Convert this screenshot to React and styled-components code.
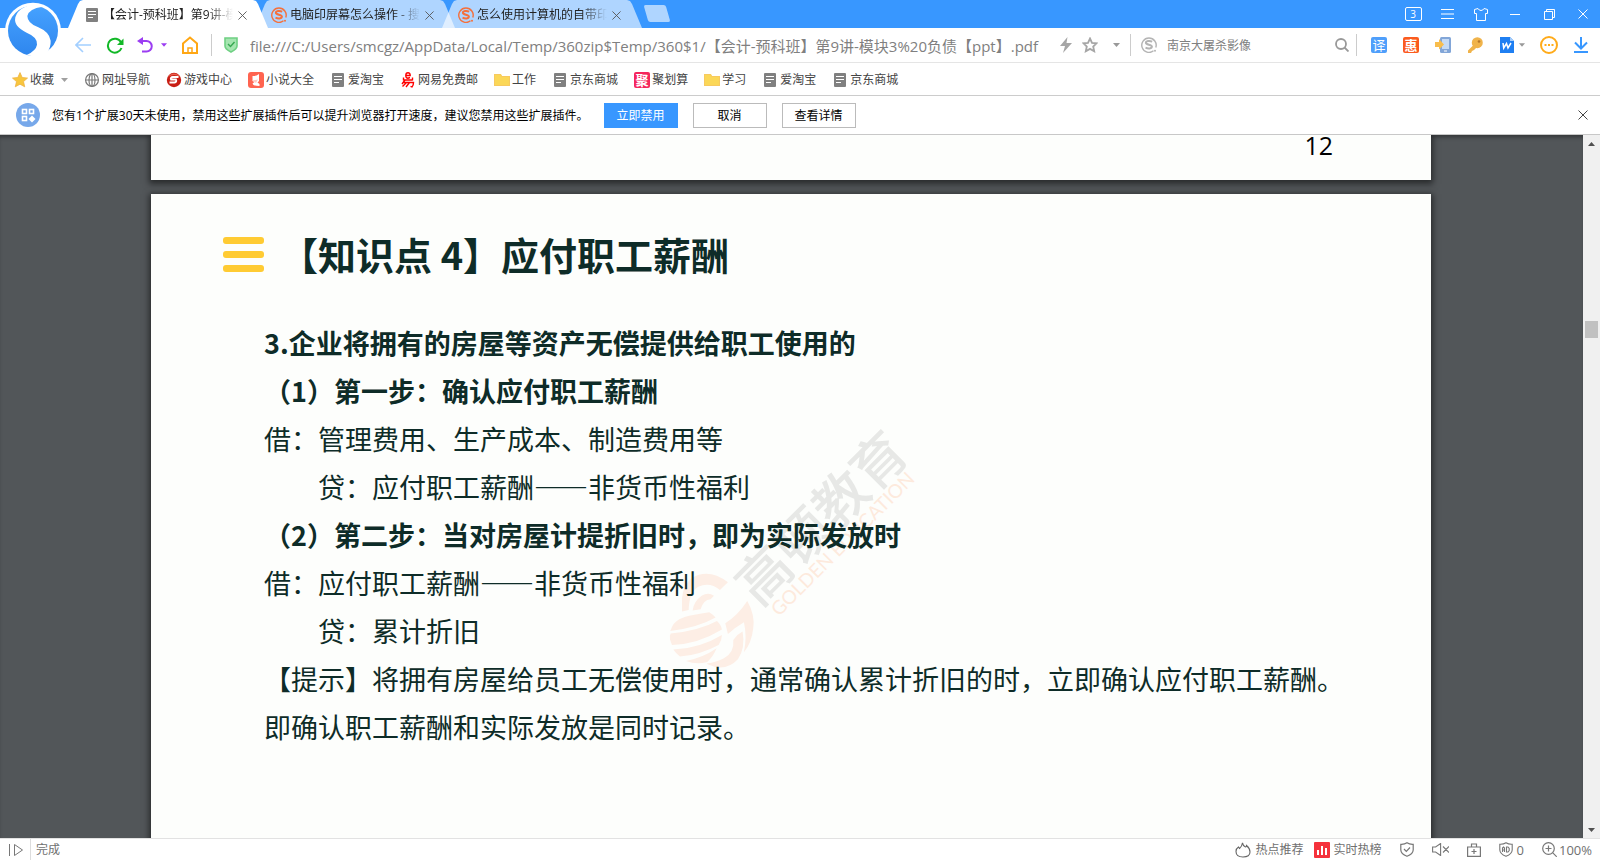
import React from "react";
import styled, { createGlobalStyle, css } from "styled-components";

const BLUE = "#3897ff";
const GREY = "#808080";

const GlobalStyle = createGlobalStyle`
  *, *::before, *::after { box-sizing: border-box; }
  body {
    margin: 0;
    font: 12px/16px "Open Sans", "Noto Sans CJK SC", sans-serif;
    color: #555;
    background: #fff;
  }
  button, input {
    font: inherit;
    color: inherit;
    border: 0;
    padding: 0;
    background: none;
  }
  svg { display: block; flex: none; }
  h1, h2, p { margin: 0; }
`;

const Window = styled.div`
  display: flex;
  flex-direction: column;
  height: 100vh;
  overflow: hidden;
`;

/* ---------- tab strip ---------- */

const Header = styled.header`
  position: relative;
`;

const BrandLogo = styled.svg`
  position: absolute;
  left: 0;
  top: 0;
  z-index: 3;
`;

const TabStrip = styled.div`
  display: flex;
  height: 28px;
  padding-left: 68px;
  background: ${BLUE};
`;

const slanted = css`
  &::before {
    content: "";
    position: absolute;
    z-index: -1;
    inset: 0;
    background: var(--fill);
    clip-path: polygon(
      0 100%, 10px 4px, 12px 1px, 15px 0,
      calc(100% - 15px) 0, calc(100% - 12px) 1px, calc(100% - 10px) 4px, 100% 100%
    );
  }
`;

const Tab = styled.div`
  --fill: ${(p) => (p.$active ? "#fff" : "rgba(255, 255, 255, 0.6)")};
  position: relative;
  z-index: ${(p) => (p.$active ? 2 : 1)};
  display: flex;
  align-items: center;
  width: 200px;
  margin-right: -13px;
  padding: 2px 16px 0;
  color: #222;
  ${slanted}
`;

const TabLabel = styled.button`
  display: flex;
  align-items: center;
  gap: 3px;
  width: 149px;
  span {
    flex: 1;
    min-width: 0;
    white-space: nowrap;
    text-align: left;
    mask-image: linear-gradient(to right, #000 80%, transparent);
  }
`;

const TabClose = styled.button`
  display: grid;
  place-items: center;
  width: 24px;
  height: 24px;
`;

const NewTab = styled.button`
  width: 22px;
  height: 17px;
  margin: 5px 0 0 17px;
  border-radius: 2px;
  background: rgba(255, 255, 255, 0.6);
  transform: skewX(16deg);
`;

const WindowControls = styled.div`
  display: flex;
  margin-left: auto;
`;

const WindowButton = styled.button`
  display: grid;
  place-items: center;
  width: 34px;
  height: 28px;
  color: #fff;
`;

const TabCount = styled.span`
  width: 17px;
  height: 14px;
  border: 1px solid #fff;
  border-radius: 2px;
  font-size: 10px;
  line-height: 12px;
  text-align: center;
`;

/* ---------- address bar ---------- */

const Toolbar = styled.div`
  display: flex;
  align-items: center;
  height: 35px;
  padding: 0 9px 0 67px;
  border-bottom: 1px solid #e5e5e5;
`;

const IconButton = styled.button`
  display: grid;
  place-items: center;
  width: ${(p) => p.$w || 32}px;
  height: 32px;
`;

const Divider = styled.span`
  width: 1px;
  height: 22px;
  background: #ccc;
`;

const AddressField = styled.label`
  display: flex;
  flex: 1;
  align-items: center;
  gap: 12px;
  padding-left: 12px;
  input {
    flex: 1;
    min-width: 0;
    height: 24px;
    font-size: 15px;
    color: ${GREY};
    outline: 0;
  }
`;

const SearchField = styled.label`
  display: flex;
  align-items: center;
  gap: 10px;
  width: 197px;
  padding-left: 10px;
  input {
    flex: 1;
    min-width: 0;
    height: 24px;
    outline: 0;
    &::placeholder { color: ${GREY}; opacity: 1; }
  }
`;

const Tools = styled.div`
  display: flex;
  gap: 12px;
  padding-left: 12px;
`;

const SplitTool = styled.div`
  display: flex;
`;

/* ---------- bookmarks ---------- */

const Bookmarks = styled.nav`
  display: flex;
  align-items: center;
  gap: 16px;
  height: 33px;
  padding: 1px 0 0 12px;
  border-bottom: 1px solid #ccc;
`;

const Bookmark = styled.a`
  display: flex;
  align-items: center;
  gap: 2px;
  color: #444;
  text-decoration: none;
  white-space: nowrap;
`;

const Caret = styled.svg`
  margin-left: ${(p) => (p.$spaced ? 5 : 0)}px;
`;

/* ---------- notice ---------- */

const Notice = styled.div`
  display: flex;
  align-items: center;
  height: 39px;
  padding: 0 5px 0 16px;
  border-bottom: 1px solid #c8c8c8;
  color: #000;
`;

const NoticeText = styled.p`
  margin: 0 15px 0 12px;
  padding-top: 2px;
  min-width: 536px;
  white-space: nowrap;
`;

const NoticeButton = styled.button`
  width: 74px;
  height: 25px;
  margin-right: 15px;
  padding-top: 1px;
  border: 1px solid ${(p) => (p.$primary ? BLUE : "#bbb")};
  background: ${(p) => (p.$primary ? BLUE : "#fff")};
  color: ${(p) => (p.$primary ? "#fff" : "#000")};
`;

const NoticeClose = styled.button`
  display: grid;
  place-items: center;
  width: 24px;
  height: 24px;
  margin-left: auto;
`;

/* ---------- document ---------- */

const Viewer = styled.main`
  display: flex;
  flex: 1;
  min-height: 0;
  background: #525659;
`;

const Pages = styled.div`
  display: flex;
  flex: 1;
  flex-direction: column;
  gap: 14px;
  padding: 0 152px 0 151px;
  overflow: hidden;
  box-shadow: inset 0 4px 4px -2px rgba(0, 0, 0, 0.4);
`;

const Sheet = styled.section`
  position: relative;
  flex: none;
  background: #fdfefc;
  color: #0e2c28;
  font-family: "Noto Sans CJK SC", sans-serif;
  box-shadow: 0 2px 6px 2px rgba(0, 0, 0, 0.5);
`;

const PreviousSheet = styled(Sheet)`
  height: 45px;
  padding-right: 98px;
  color: #000;
  font: 25px/20px "Open Sans", sans-serif;
  text-align: right;
`;

const CurrentSheet = styled(Sheet)`
  min-height: 720px;
  padding: 36px 72px;
`;

const SheetTitle = styled.h1`
  display: flex;
  align-items: center;
  gap: 16px;
  font-size: 38px;
  font-weight: 700;
  line-height: 48px;
`;

const TitleBars = styled.span`
  display: grid;
  gap: 7px;
  width: 41px;
  i {
    height: 7px;
    border-radius: 3px;
    background: #ffcb33;
  }
`;

const SheetBody = styled.div`
  position: relative;
  padding: 41px 0 0 41px;
  font-size: 27px;
  line-height: 48px;
  white-space: nowrap;
`;

const Step = styled.h2`
  font-size: inherit;
  line-height: inherit;
  font-weight: 700;
`;

const Entry = styled.p`
  padding-left: ${(p) => (p.$indent ? 54 : 0)}px;
`;

const WideDash = styled.span`
  font-variant-east-asian: full-width;
`;

const Watermark = styled.svg`
  position: absolute;
  left: 509px;
  top: 226px;
`;

const ScrollTrack = styled.div`
  display: flex;
  flex-direction: column;
  align-items: center;
  width: 17px;
  background: #f0f0f0;
`;

const ScrollArrow = styled.button`
  display: grid;
  place-items: center;
  width: 17px;
  height: 17px;
`;

const ScrollRail = styled.div`
  flex: 1;
  padding-top: 169px;
`;

const ScrollThumb = styled.div`
  width: 13px;
  height: 17px;
  background: #c1c1c1;
`;

/* ---------- status bar ---------- */

const StatusBar = styled.footer`
  display: flex;
  align-items: center;
  height: 22px;
  padding: 0 8px;
  border-top: 1px solid #e2e2e2;
  color: #707070;
`;

const StatusDivider = styled.span`
  width: 1px;
  height: 21px;
  margin: 0 5px 0 6px;
  background: #ddd;
`;

const StatusGroup = styled.div`
  display: flex;
  align-items: center;
  gap: 18px;
  margin-left: auto;
`;

const NewsGroup = styled.div`
  display: flex;
  gap: 10px;
`;

const StatusItem = styled.button`
  display: flex;
  align-items: center;
  gap: ${(p) => p.$gap || 4}px;
  font-size: ${(p) => p.$size || 12}px;
`;

/* ---------- icons ---------- */

const Cross = ({ size = 10, color = "#555", w = 1 }) => (
  <svg width={size} height={size} viewBox="0 0 10 10" stroke={color} strokeWidth={w}>
    <path d="M.5.5l9 9M9.5.5l-9 9" />
  </svg>
);

const Triangle = ({ color, up, spaced, size = 7 }) => (
  <Caret $spaced={spaced} width={size} height="4" viewBox="0 0 7 4" fill={color}>
    <path d={up ? "M0 4h7L3.500 0z" : "M0 0h7L3.500 4z"} />
  </Caret>
);

const DocIcon = () => (
  <svg width="16" height="16" viewBox="0 0 16 16">
    <rect x="2" y="1" width="12" height="14" rx="1" fill="#808080" />
    <path d="M4 4.500h8M4 7.500h8M4 10.500h5" stroke="#fff" />
  </svg>
);

const SogouIcon = ({ color }) => (
  <svg width="16" height="16" viewBox="0 0 16 16" fill="none" stroke={color}>
    <path d="M12.500 13.800A7.200 7.200 0 1 1 14.800 10.500" strokeWidth="1.400" />
    <path d="M11.200 4.600C8.500 3.400 4.800 3.800 4.900 5.900c.1 2 6 1.600 6 3.700 0 2.200-3.800 2.300-6.400 1.100" strokeWidth="2" />
    <circle cx="14" cy="13.800" r="1" fill={color} stroke="none" />
  </svg>
);

const FolderIcon = () => (
  <svg width="16" height="16" viewBox="0 0 16 16">
    <path d="M0 2h7l1 2h8v10H0z" fill="#fbd757" />
    <path d="M.5 2.500h6l1 2h8v9H.5z" fill="none" stroke="#f7c95f" />
  </svg>
);

const StarIcon = () => (
  <svg width="16" height="16" viewBox="0 0 16 16">
    <path d="M8 .6l2.200 4.900 5.300.6-4 3.500 1.200 5.200L8 12.200l-4.700 2.600 1.200-5.200-4-3.500 5.300-.6z" fill="#f8c63d" stroke="#eeb144" strokeWidth=".8" />
  </svg>
);

const GlobeIcon = () => (
  <svg width="16" height="16" viewBox="0 0 16 16" fill="none" stroke="#777" strokeWidth="1.200">
    <circle cx="8" cy="8" r="6.400" />
    <ellipse cx="8" cy="8" rx="3" ry="6.400" />
    <path d="M1.600 8h12.800M8 1.600v12.800" />
  </svg>
);

const GameIcon = () => (
  <svg width="16" height="16" viewBox="0 0 16 16">
    <circle cx="8" cy="8" r="7.200" fill="#c81e14" />
    <path d="M2 5a7 7 0 0 1 12 0Q8 1 2 5z" fill="#e8604e" />
    <path d="M12.500 5H7Q4 5.200 5 7.500h5q1 2.500-1.500 3H3.500" fill="none" stroke="#fff" strokeWidth="1.800" />
  </svg>
);

const NovelIcon = () => (
  <svg width="16" height="16" viewBox="0 0 16 16">
    <rect width="16" height="16" rx="3" fill="#ff6450" />
    <path d="M4.500 4Q8 4.500 11 2v7l-1.500 1.500L11.500 12v2Q8 14 5.500 13l-1-1.500 2-1.500-2-1z" fill="#fff" />
    <path d="M4.500 8.500L10 7.500 8 11z" fill="#ffc9c0" />
  </svg>
);

const NeteaseIcon = () => (
  <svg width="16" height="16" viewBox="0 0 16 16" fill="none" stroke="#f00" strokeWidth="1.400">
    <path d="M5.800 3.500h4.400q0-2.700-2.200-2.700T5.800 3.500 8 6.200l2-.7" />
    <path d="M3.500 8h9M5 8l-3 4M3 10.500h10.500q0 3-1.500 4.500l-1.500-.6M6.500 10.500L2.500 14.500M9.500 10.500L6 15M12.500 5.500v3M3.500 5.500v3" />
  </svg>
);

const Badge = styled.span`
  display: grid;
  place-items: center;
  width: 16px;
  height: 16px;
  border-radius: 2px;
  background: ${(p) => p.$bg};
  color: #fff;
  font: ${(p) => (p.$bold ? 700 : 400)} 13px/16px "Noto Sans CJK SC", sans-serif;
`;

const BrandMark = () => (
  <BrandLogo width="70" height="60" viewBox="0 0 210 180" role="img" aria-label="搜狗浏览器">
    <defs>
      <linearGradient id="ball" x1="0" y1="0" x2="0" y2="1">
        <stop offset="0" stopColor="#46a2ff" />
        <stop offset="1" stopColor="#2e86ee" />
      </linearGradient>
    </defs>
    <circle cx="99" cy="92" r="84" fill="#fff" />
    <circle cx="99" cy="92" r="75" fill="url(#ball)" />
    <path d="M118 13Q58 14 46 52Q40 80 80 98Q114 112 111 134Q108 152 80 165L112 172L140 160Q153 142 152 122Q148 96 115 82Q82 70 82 48Q86 26 128 20Z" fill="#fff" />
  </BrandLogo>
);

const WatermarkArt = () => (
  <Watermark width="260" height="250" viewBox="660 420 260 250" aria-hidden="true">
    <g transform="translate(660 565) scale(.333)" fill="#fdeee5">
      <path d="M66 140V100Q70 60 95 40Q145 8 204 52L180 75Q150 50 115 65Q88 80 86 135Z" />
      <path d="M98 137Q100 110 125 92Q145 80 162 92L152 103Q130 105 122 133Z" />
      <path d="M36 186Q48 158 100 150Q125 146 148 142Q158 148 167 158Q110 190 31 198Z" />
      <path d="M30 224Q28 214 32 206Q120 196 171 168Q184 180 186 194Q110 240 36 240Z" />
      <path d="M40 254Q120 250 186 210Q186 226 176 240Q120 270 60 275Q48 266 40 254Z" />
      <path d="M78 288Q130 278 170 250Q160 275 142 291Q110 300 78 288Z" />
      <path d="M196 175Q235 150 262 108Q286 150 280 190Q275 235 252 262Q262 215 252 172Q225 188 204 207Z" />
      <path d="M220 225Q232 208 248 200Q257 250 234 283Q205 314 165 306Q145 300 140 296Q170 292 192 280Q224 262 220 225Z" />
    </g>
    <g transform="translate(764 575) rotate(-45)">
      <text x="-27" y="20" fontSize="54" fill="#e7e8e6" fontWeight="500" fontFamily="Noto Sans CJK SC">高顿教育</text>
    </g>
    <g transform="translate(779 617) rotate(-45)">
      <text x="0" y="0" fontSize="19" fill="#fdeadd" fontFamily="Lato">GOLDEN EDUCATION</text>
    </g>
  </Watermark>
);

const BOOKMARKS = [
  [<GlobeIcon />, "网址导航"],
  [<GameIcon />, "游戏中心"],
  [<NovelIcon />, "小说大全"],
  [<DocIcon />, "爱淘宝"],
  [<NeteaseIcon />, "网易免费邮"],
  [<FolderIcon />, "工作"],
  [<DocIcon />, "京东商城"],
  [<Badge $bg="#f5265c" $bold>聚</Badge>, "聚划算"],
  [<FolderIcon />, "学习"],
  [<DocIcon />, "爱淘宝"],
  [<DocIcon />, "京东商城"],
];

const TABS = [
  { icon: <DocIcon />, title: "【会计-预科班】第9讲-模", active: true },
  { icon: <SogouIcon color="#f4703c" />, title: "电脑印屏幕怎么操作 - 搜" },
  { icon: <SogouIcon color="#f4703c" />, title: "怎么使用计算机的自带印" },
];

export default function App() {
  return (
    <Window lang="zh-CN">
      <GlobalStyle />
      <Header>
        <BrandMark />
        <TabStrip>
          {TABS.map((t) => (
            <Tab key={t.title} $active={t.active}>
              <TabLabel>
                {t.icon}
                <span>{t.title}</span>
              </TabLabel>
              <TabClose aria-label="关闭标签">
                <Cross size={9} />
              </TabClose>
            </Tab>
          ))}
          <NewTab aria-label="新建标签" />
          <WindowControls>
            <WindowButton><TabCount>3</TabCount></WindowButton>
            <WindowButton aria-label="菜单">
              <svg width="13" height="10" stroke="#fff"><path d="M0 .5h13M0 5h13M0 9.500h13" /></svg>
            </WindowButton>
            <WindowButton aria-label="皮肤">
              <svg width="14" height="13" viewBox="0 0 14 13" fill="none" stroke="#fff">
                <path d="M4 .5L.5 1.500v4h2v7h9v-7h2v-4L10 .5Q9 2.500 7 2.500T4 .5z" />
              </svg>
            </WindowButton>
            <WindowButton aria-label="最小化">
              <svg width="10" height="1"><path d="M0 .5h10" stroke="#fff" /></svg>
            </WindowButton>
            <WindowButton aria-label="还原">
              <svg width="11" height="11" viewBox="0 0 11 11" fill="none" stroke="#fff">
                <path d="M.5 2.500h8v8h-8zM2.500 2.500v-2h8v8h-2" />
              </svg>
            </WindowButton>
            <WindowButton aria-label="关闭"><Cross size={10} color="#fff" /></WindowButton>
          </WindowControls>
        </TabStrip>
      </Header>

      <Toolbar>
        <IconButton aria-label="后退">
          <svg width="16" height="16" viewBox="0 0 16 16" fill="none" stroke="#a3cfff" strokeWidth="1.600">
            <path d="M16 8H1M8 1L1 8l7 7" />
          </svg>
        </IconButton>
        <IconButton aria-label="刷新">
          <svg width="18" height="17" viewBox="0 0 18 17" fill="none" stroke="#12b827" strokeWidth="2">
            <path d="M15.500 11A7 7 0 1 1 15 5.200" />
            <path d="M17.500 1.500V8H11z" fill="#12b827" stroke="none" />
          </svg>
        </IconButton>
        <IconButton $w={28} aria-label="撤销">
          <svg width="16" height="16" viewBox="0 0 16 16" fill="none" stroke="#9b3df2" strokeWidth="2">
            <path d="M4 4h5.500a5 5 0 0 1 0 10.500H5" />
            <path d="M0 4L6 0v8z" fill="#9b3df2" stroke="none" />
          </svg>
        </IconButton>
        <IconButton $w={10} aria-label="更多撤销"><Triangle color="#9b3df2" size={6} /></IconButton>
        <IconButton $w={42} aria-label="主页">
          <svg width="16" height="18" viewBox="0 0 16 18" fill="none" stroke="#ffa714" strokeWidth="2">
            <path d="M1 7.500V17h14V7.500L8 1.500z" />
            <path d="M6 17v-5h4v5" strokeWidth="1.500" />
          </svg>
        </IconButton>
        <Divider />
        <AddressField>
          <svg width="14" height="16" viewBox="0 0 14 16">
            <path d="M1 1h12v8q0 3-6 6-6-3-6-6z" fill="#a5e5b0" stroke="#6fd083" strokeWidth="1.600" />
            <path d="M4 7l2.500 2.500L10.500 5" fill="none" stroke="#36a850" strokeWidth="1.400" />
          </svg>
          <input aria-label="地址" defaultValue="file:///C:/Users/smcgz/AppData/Local/Temp/360zip$Temp/360$1/【会计-预科班】第9讲-模块3%20负债【ppt】.pdf" />
        </AddressField>
        <IconButton $w={24} aria-label="极速模式">
          <svg width="12" height="16" viewBox="0 0 12 16" fill="#a6a6a6"><path d="M7.500 0L0 9h5l-2 7 9-10H6.500z" /></svg>
        </IconButton>
        <IconButton $w={24} aria-label="收藏本页">
          <svg width="16" height="16" viewBox="0 0 16 16" fill="none" stroke="#a6a6a6" strokeWidth="1.800">
            <path d="M8 1.500l2 4.300 4.500.5-3.300 3.200 1 4.700L8 11.900l-4.200 2.300 1-4.700L1.500 6.300 6 5.800z" />
          </svg>
        </IconButton>
        <IconButton $w={28} aria-label="收藏选项"><Triangle color="#999" /></IconButton>
        <Divider />
        <SearchField>
          <SogouIcon color="#b4b4b4" />
          <input aria-label="搜索" placeholder="南京大屠杀影像" />
        </SearchField>
        <IconButton $w={28} aria-label="搜索">
          <svg width="14" height="14" viewBox="0 0 14 14" fill="none" stroke="#999" strokeWidth="1.800">
            <circle cx="6" cy="6" r="5" /><path d="M9.500 9.500L13.500 13.500" />
          </svg>
        </IconButton>
        <Divider />
        <Tools>
          <IconButton $w={20}><Badge $bg="#4f9ffb">译</Badge></IconButton>
          <IconButton $w={20}><Badge $bg="#fb5b1e" $bold>惠</Badge></IconButton>
          <IconButton $w={20} aria-label="发送到手机">
            <svg width="16" height="16" viewBox="0 0 16 16">
              <rect x="5" y="0" width="11" height="16" rx="1.500" fill="#82a6d8" />
              <rect x="7" y="2" width="7" height="10" fill="#c4daf5" />
              <path d="M9 14h3" stroke="#fff" />
              <path d="M0 5h4V2l5 5.500-5 5V10H0z" fill="#f8bd4c" />
            </svg>
          </IconButton>
          <IconButton $w={20} aria-label="密码">
            <svg width="16" height="16" viewBox="0 0 16 16">
              <circle cx="10.300" cy="5.700" r="5.500" fill="#f0b34a" />
              <path d="M7 7.500L1 13.500V16h3l1-2 2-1 3-3" fill="#f0b34a" />
              <circle cx="12" cy="4.500" r="1.300" fill="#b5772a" />
            </svg>
          </IconButton>
          <SplitTool>
            <IconButton $w={20} aria-label="文档">
              <svg width="14" height="16" viewBox="0 0 14 16">
                <path d="M0 0h10l4 4v12H0z" fill="#1f7ff2" />
                <path d="M10 0l4 4h-4z" fill="#a6cdfb" />
                <path d="M3 6l.7 5L6.500 6.500 8 11l3-5" fill="none" stroke="#fff" strokeWidth="1.500" />
              </svg>
            </IconButton>
            <IconButton $w={10} aria-label="文档选项"><Triangle color="#999" size={6} /></IconButton>
          </SplitTool>
          <IconButton $w={20} aria-label="更多">
            <svg width="18" height="18" viewBox="0 0 18 18" fill="none" stroke="#ffab1a" strokeWidth="2">
              <circle cx="9" cy="9" r="8" />
              <path d="M4.500 9h2M8 9h2M11.500 9h2" />
            </svg>
          </IconButton>
          <IconButton $w={20} aria-label="下载">
            <svg width="14" height="16" viewBox="0 0 14 16" fill="none" stroke={BLUE} strokeWidth="2">
              <path d="M7 0v11M1 5.500l6 6 6-6M0 15h14" />
            </svg>
          </IconButton>
        </Tools>
      </Toolbar>

      <Bookmarks>
        <Bookmark href="#fav">
          <StarIcon />
          收藏
          <Triangle color="#a0a0a0" spaced />
        </Bookmark>
        {BOOKMARKS.map(([icon, label], i) => (
          <Bookmark key={i} href={`#b${i}`}>
            {icon}
            {label}
          </Bookmark>
        ))}
      </Bookmarks>

      <Notice>
        <svg width="24" height="24" viewBox="0 0 24 24">
          <circle cx="12" cy="12" r="12" fill="#77a8ea" />
          <g fill="none" stroke="#fff" strokeWidth="1.600">
            <rect x="6.500" y="6.500" width="4" height="4" />
            <rect x="13.500" y="6.500" width="4" height="4" />
            <rect x="6.500" y="13.500" width="4" height="4" />
          </g>
          <path d="M16 12.500l3.500 3.500-3.500 3.500-3.500-3.500z" fill="#fff" />
        </svg>
        <NoticeText>您有1个扩展30天未使用，禁用这些扩展插件后可以提升浏览器打开速度，建议您禁用这些扩展插件。</NoticeText>
        <NoticeButton $primary>立即禁用</NoticeButton>
        <NoticeButton>取消</NoticeButton>
        <NoticeButton>查看详情</NoticeButton>
        <NoticeClose aria-label="关闭提示"><Cross size={10} color="#444" /></NoticeClose>
      </Notice>

      <Viewer>
        <Pages>
          <PreviousSheet>12</PreviousSheet>
          <CurrentSheet>
            <WatermarkArt />
            <SheetTitle>
              <TitleBars><i /><i /><i /></TitleBars>
              【知识点 4】应付职工薪酬
            </SheetTitle>
            <SheetBody>
              <Step>3.企业将拥有的房屋等资产无偿提供给职工使用的</Step>
              <Step>（1）第一步：确认应付职工薪酬</Step>
              <Entry>借：管理费用、生产成本、制造费用等</Entry>
              <Entry $indent>贷：应付职工薪酬<WideDash>——</WideDash>非货币性福利</Entry>
              <Step>（2）第二步：当对房屋计提折旧时，即为实际发放时</Step>
              <Entry>借：应付职工薪酬<WideDash>——</WideDash>非货币性福利</Entry>
              <Entry $indent>贷：累计折旧</Entry>
              <Entry>【提示】将拥有房屋给员工无偿使用时，通常确认累计折旧的时，立即确认应付职工薪酬。</Entry>
              <Entry>即确认职工薪酬和实际发放是同时记录。</Entry>
            </SheetBody>
          </CurrentSheet>
        </Pages>
        <ScrollTrack>
          <ScrollArrow aria-label="向上滚动"><Triangle color="#505050" up /></ScrollArrow>
          <ScrollRail><ScrollThumb /></ScrollRail>
          <ScrollArrow aria-label="向下滚动"><Triangle color="#505050" /></ScrollArrow>
        </ScrollTrack>
      </Viewer>

      <StatusBar>
        <svg width="16" height="14" viewBox="0 0 16 14" fill="none" stroke="#777">
          <path d="M1.500 1v12M6.500 1.500v11L14.500 7z" />
        </svg>
        <StatusDivider />
        <span>完成</span>
        <StatusGroup>
          <NewsGroup>
            <StatusItem>
              <svg width="16" height="16" viewBox="0 0 16 16" fill="none" stroke="#666" strokeWidth="1.100">
                <path d="M7.500.8Q8 4 10.500 5q1 0 1-1.500 3.500 3 3.500 6.500 0 5-7 5T1 9.500Q1 6.500 3.500 5l1 1.500Q7 4.500 7.500.8z" />
              </svg>
              热点推荐
            </StatusItem>
            <StatusItem>
              <svg width="16" height="16" viewBox="0 0 16 16">
                <rect width="16" height="16" rx="1" fill="#f5323c" />
                <path d="M4 8v5M8 4v9M12 6v7" stroke="#fff" strokeWidth="2" />
              </svg>
              实时热榜
            </StatusItem>
          </NewsGroup>
          <StatusItem aria-label="安全">
            <svg width="14" height="15" viewBox="0 0 14 15" fill="none" stroke="#777" strokeWidth="1.200">
              <path d="M7 .8Q9.500 2.500 13.200 2.300V8Q13 12 7 14.300 1 12 .8 8V2.300Q4.500 2.500 7 .8z" />
              <path d="M4 7l2.300 2.300L10 5.500" />
            </svg>
          </StatusItem>
          <StatusItem aria-label="静音">
            <svg width="17" height="13" viewBox="0 0 17 13" fill="none" stroke="#777" strokeWidth="1.100">
              <path d="M.6 4v5h3l5 3.500V.5L3.600 4zM11 3.500l6 6M17 3.500l-6 6" />
            </svg>
          </StatusItem>
          <StatusItem aria-label="工具箱">
            <svg width="14" height="14" viewBox="0 0 14 14" fill="none" stroke="#777" strokeWidth="1.200">
              <path d="M.6 4h12.800v9.400H.6zM4.500 4V1h5v3M7 6v5M4.500 8.500h5" />
            </svg>
          </StatusItem>
          <StatusItem $size={13}>
            <svg width="14" height="15" viewBox="0 0 14 15" fill="none" stroke="#777" strokeWidth="1.100">
              <path d="M7 .8Q9.500 2.500 13.200 2.300V8Q13 12 7 14.300 1 12 .8 8V2.300Q4.500 2.500 7 .8z" />
              <path d="M3.500 10V6l1-1 1 1v4M3.500 8h2M7.500 5v5h1.500l1.200-1.500v-2L9 5z" />
            </svg>
            0
          </StatusItem>
          <StatusItem $size={13} $gap={2}>
            <svg width="15" height="15" viewBox="0 0 15 15" fill="none" stroke="#777" strokeWidth="1.200">
              <circle cx="6.500" cy="6.500" r="5.800" /><path d="M10.800 10.800l4 4M3.500 6.500h6M6.500 3.500v6" />
            </svg>
            100%
          </StatusItem>
        </StatusGroup>
      </StatusBar>
    </Window>
  );
}
